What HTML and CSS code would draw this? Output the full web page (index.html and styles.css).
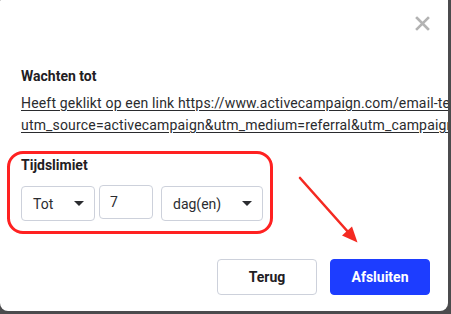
FILE: index.html
```html
<!DOCTYPE html>
<html lang="nl">
<head>
<meta charset="utf-8">
<title>Wachten tot</title>
<link rel="stylesheet" href="styles.css">
</head>
<body>
<div class="modal">
  <div class="header">
    <svg class="close" width="15" height="15" viewBox="0 0 15 15" aria-label="Sluiten">
      <path d="M2 2 L13 13 M13 2 L2 13" stroke="#b3b3b3" stroke-width="2.6" stroke-linecap="square" fill="none"/>
    </svg>
  </div>
  <div class="title">Wachten tot</div>
  <div class="link">
    <span class="line">Heeft geklikt op een link https://www.activecampaign.com/email-templates?utm_source=activecampaign&amp;</span>
    <span class="line">utm_source=activecampaign&amp;utm_medium=referral&amp;utm_campaign=email_templates</span>
  </div>
  <div class="label">Tijdslimiet</div>
  <div class="controls">
    <div class="select sel-tot"><span>Tot</span><span class="caret"></span></div>
    <div class="input">7</div>
    <div class="select sel-dag"><span>dag(en)</span><span class="caret"></span></div>
  </div>
  <div class="footer">
    <button class="btn btn-back">Terug</button>
    <button class="btn btn-primary">Afsluiten</button>
  </div>
  <div class="highlight"></div>
  <svg class="arrow" width="451" height="314" viewBox="0 0 451 314">
    <line x1="300" y1="178" x2="349" y2="233" stroke="#f42a22" stroke-width="2.6" stroke-linecap="round"/>
    <polygon points="357.5,242.5 342,235.5 352,226.5" fill="#f42a22"/>
  </svg>
</div>
</body>
</html>
```

FILE: styles.css
```css
* { box-sizing: border-box; }
html, body {
  margin: 0;
  padding: 0;
  background: #4b4b4d;
  width: 451px;
  height: 314px;
  overflow: hidden;
}
.modal {
  position: relative;
  width: 448px;
  height: 311px;
  background: #ffffff;
  border-radius: 1px 0 8px 8px;
  padding: 0 18px 0 21px;
  overflow: hidden;
  font-family: Roboto, "Liberation Sans", sans-serif;
  color: #1f2023;
  display: flex;
  flex-direction: column;
}
.header {
  height: 50px;
  display: flex;
  justify-content: flex-end;
  align-items: flex-start;
  padding-top: 16px;
  flex-shrink: 0;
}
.close { display: block; }
.title {
  margin-top: 16px;
  font-size: 14px;
  line-height: 20px;
  font-weight: 700;
}
.link {
  margin-top: 6px;
  font-size: 14px;
  line-height: 22px;
  letter-spacing: 0.17px;
  color: #2a2b2e;
  margin-right: -40px;
}
.link .line {
  display: block;
  white-space: nowrap;
  text-decoration: underline;
  text-underline-offset: 2px;
}
.label {
  margin-top: 19px;
  font-size: 14px;
  line-height: 20px;
  font-weight: 700;
}
.controls {
  margin-top: 11px;
  display: flex;
  align-items: flex-start;
  font-size: 14px;
  color: #2b2c30;
}
.select, .input {
  border: 1px solid #cdd1db;
  border-radius: 4px;
  height: 35px;
  display: flex;
  align-items: center;
}
.select {
  justify-content: space-between;
  padding: 0 10px 0 11px;
}
.sel-tot { width: 74px; }
.sel-dag { width: 102px; margin-left: 8px; }
.input {
  width: 54px;
  height: 34px;
  margin-left: 4px;
  margin-top: -1px;
  padding-left: 10px;
}
.caret {
  width: 0;
  height: 0;
  border-left: 5px solid transparent;
  border-right: 5px solid transparent;
  border-top: 5px solid #2b2c30;
}
.footer {
  margin-top: 38px;
  display: flex;
  justify-content: flex-end;
  gap: 13px;
}
.btn {
  width: 100px;
  height: 36px;
  border-radius: 4px;
  font-family: Roboto, "Liberation Sans", sans-serif;
  font-size: 14px;
  font-weight: 700;
  cursor: pointer;
}
.btn-back {
  background: #ffffff;
  border: 1px solid #cdd1db;
  color: #1f2023;
}
.btn-primary {
  background: #1d3dff;
  border: 1px solid #1d3dff;
  color: #ffffff;
}
.highlight {
  position: absolute;
  left: 7px;
  top: 151px;
  width: 266px;
  height: 83px;
  border: 3px solid #ff2121;
  border-radius: 16px;
  pointer-events: none;
}
.arrow {
  position: absolute;
  left: 0;
  top: 0;
  pointer-events: none;
}
```
